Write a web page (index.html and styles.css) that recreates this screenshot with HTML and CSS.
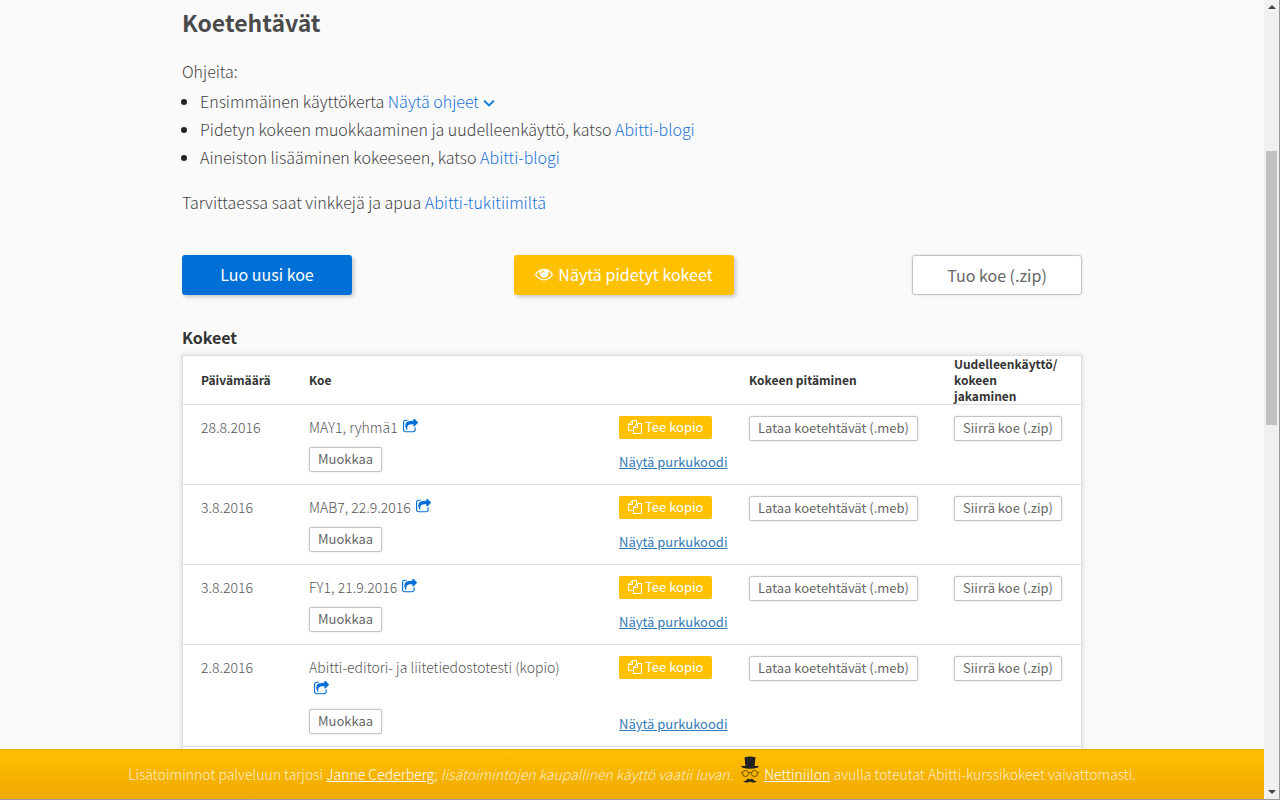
FILE: index.html
```html
<!DOCTYPE html>
<html lang="fi">
<head>
<meta charset="utf-8">
<meta name="viewport" content="width=device-width, initial-scale=1">
<title>Abitti – Koetehtävät</title>
<link rel="stylesheet" href="styles.css">
</head>
<body>
<svg class="sprite" aria-hidden="true">
  <symbol id="angle-down" viewBox="320 512 1152 896"><path d="M1395 736q0 13-10 23l-466 466q-10 10-23 10t-23-10l-466-466q-10-10-10-23t10-23l50-50q10-10 23-10t23 10l393 393 393-393q10-10 23-10t23 10l50 50q10 10 10 23z"/></symbol>
  <symbol id="eye" viewBox="0 0 1792 1792"><path d="M1664 960q-152-236-381-353 61 104 61 225 0 185-131.5 316.5t-316.5 131.5-316.5-131.5-131.5-316.5q0-121 61-225-229 117-381 353 133 205 333.5 326.5t434.5 121.5 434.5-121.5 333.5-326.5zm-720-384q0-20-14-34t-34-14q-125 0-214.5 89.5t-89.5 214.5q0 20 14 34t34 14 34-14 14-34q0-86 61-147t147-61q20 0 34-14t14-34zm848 384q0 34-20 69-140 230-376.5 368.5t-499.5 138.5-499.5-139-376.5-368q-20-35-20-69t20-69q140-229 376.5-368t499.5-139 499.5 139 376.5 368q20 35 20 69z"/></symbol>
  <symbol id="copy" viewBox="0 0 1792 1792"><path d="M1696 384q40 0 68 28t28 68v1216q0 40-28 68t-68 28h-960q-40 0-68-28t-28-68v-288h-544q-40 0-68-28t-28-68v-672q0-40 20-88t48-76l408-408q28-28 76-48t88-20h416q40 0 68 28t28 68v328q68-40 128-40h416zm-544 213l-299 299h299v-299zm-640-384l-299 299h299v-299zm196 647l316-316v-416h-384v416q0 40-28 68t-68 28h-416v640h512v-256q0-40 20-88t48-76zm956 804v-1152h-384v416q0 40-28 68t-68 28h-416v640h896z"/></symbol>
  <symbol id="share" viewBox="64 64 1664 1536"><path d="M1472 989v259q0 119-84.5 203.5t-203.5 84.5h-832q-119 0-203.5-84.5t-84.5-203.5v-832q0-119 84.5-203.5t203.5-84.5h255q13 0 22.5 9.5t9.5 22.5q0 27-26 32-77 26-133 60-10 4-16 4h-112q-66 0-113 47t-47 113v832q0 66 47 113t113 47h832q66 0 113-47t47-113v-214q0-19 18-29 28-13 54-37 16-16 35-8 21 9 21 29zm237-496l-384 384q-18 19-45 19-12 0-25-5-39-17-39-59v-192h-160q-323 0-438 131-119 137-74 473 3 23-20 34-8 2-12 2-16 0-26-13-10-14-21-31t-39.5-68.5-49.5-99.5-38.5-114-17.5-122q0-49 3.5-91t14-90 28-88 47-81.5 68.5-74 94.5-61.5 124.5-48.5 159.5-30.5 196.5-11h160v-192q0-42 39-59 13-5 25-5 26 0 45 19l384 384q19 19 19 45t-19 45z"/></symbol>
</svg>
<div class="window">
  <div class="page">
    <div class="view">
      <main class="content">
        <h1 class="title">Koetehtävät</h1>
        <p class="text">Ohjeita:</p>
        <ul class="help">
          <li>Ensimmäinen käyttökerta <a class="link" href="#">Näytä ohjeet <svg class="icon-angle" aria-hidden="true"><use href="#angle-down"/></svg></a></li>
          <li>Pidetyn kokeen muokkaaminen ja uudelleenkäyttö, katso <a class="link" href="#">Abitti-blogi</a></li>
          <li>Aineiston lisääminen kokeeseen, katso <a class="link" href="#">Abitti-blogi</a></li>
        </ul>
        <p class="text">Tarvittaessa saat vinkkejä ja apua <a class="link" href="#">Abitti-tukitiimiltä</a></p>
        <div class="actions">
          <button class="btn btn-blue" type="button">Luo uusi koe</button>
          <button class="btn btn-yellow" type="button"><svg class="icon-eye" aria-hidden="true"><use href="#eye"/></svg>Näytä pidetyt kokeet</button>
          <button class="btn btn-plain" type="button">Tuo koe (.zip)</button>
        </div>
        <h2 class="subtitle">Kokeet</h2>
        <table class="exams">
          <thead>
            <tr><th>Päivämäärä</th><th>Koe</th><th></th><th>Kokeen pitäminen</th><th>Uudelleenkäyttö/<br>kokeen jakaminen</th></tr>
          </thead>
          <tbody>
            <tr>
              <td><span class="date">28.8.2016</span></td>
              <td><div class="name">MAY1, ryhmä1<a class="share" href="#" aria-label="Jaa"><svg class="icon-share" aria-hidden="true"><use href="#share"/></svg></a></div><button class="small" type="button">Muokkaa</button></td>
              <td class="split"><button class="small small-yellow" type="button"><svg class="icon-copy" aria-hidden="true"><use href="#copy"/></svg>Tee kopio</button><a class="code" href="#">Näytä purkukoodi</a></td>
              <td><button class="small" type="button">Lataa koetehtävät (.meb)</button></td>
              <td><button class="small" type="button">Siirrä koe (.zip)</button></td>
            </tr>
            <tr>
              <td><span class="date">3.8.2016</span></td>
              <td><div class="name">MAB7, 22.9.2016<a class="share" href="#" aria-label="Jaa"><svg class="icon-share" aria-hidden="true"><use href="#share"/></svg></a></div><button class="small" type="button">Muokkaa</button></td>
              <td class="split"><button class="small small-yellow" type="button"><svg class="icon-copy" aria-hidden="true"><use href="#copy"/></svg>Tee kopio</button><a class="code" href="#">Näytä purkukoodi</a></td>
              <td><button class="small" type="button">Lataa koetehtävät (.meb)</button></td>
              <td><button class="small" type="button">Siirrä koe (.zip)</button></td>
            </tr>
            <tr>
              <td><span class="date">3.8.2016</span></td>
              <td><div class="name">FY1, 21.9.2016<a class="share" href="#" aria-label="Jaa"><svg class="icon-share" aria-hidden="true"><use href="#share"/></svg></a></div><button class="small" type="button">Muokkaa</button></td>
              <td class="split"><button class="small small-yellow" type="button"><svg class="icon-copy" aria-hidden="true"><use href="#copy"/></svg>Tee kopio</button><a class="code" href="#">Näytä purkukoodi</a></td>
              <td><button class="small" type="button">Lataa koetehtävät (.meb)</button></td>
              <td><button class="small" type="button">Siirrä koe (.zip)</button></td>
            </tr>
            <tr>
              <td><span class="date">2.8.2016</span></td>
              <td><div class="name">Abitti-editori- ja liitetiedostotesti (kopio)<a class="share" href="#" aria-label="Jaa"><svg class="icon-share" aria-hidden="true"><use href="#share"/></svg></a></div><button class="small" type="button">Muokkaa</button></td>
              <td class="split"><button class="small small-yellow" type="button"><svg class="icon-copy" aria-hidden="true"><use href="#copy"/></svg>Tee kopio</button><a class="code" href="#">Näytä purkukoodi</a></td>
              <td><button class="small" type="button">Lataa koetehtävät (.meb)</button></td>
              <td><button class="small" type="button">Siirrä koe (.zip)</button></td>
            </tr>
          </tbody>
        </table>
      </main>
    </div>
    <footer class="banner">
      <span>Lisätoiminnot palveluun tarjosi <a href="#">Janne Cederberg</a>; <em>lisätoimintojen kaupallinen käyttö vaatii luvan.</em></span>
      <svg class="niilo" viewBox="0 0 18 28" aria-hidden="true">
        <path class="ink" d="M3.5 1.2Q9 0 14.5 1.2L13.6 10Q16 10.200 17 9.800Q18 10.400 17 11.600Q9 14 1 11.600Q0 10.400 1 9.800Q2 10.200 4.400 10Z"/>
        <g class="glasses"><circle cx="4.500" cy="17.500" r="3"/><circle cx="13.500" cy="17.500" r="3"/><path d="M7.500 17Q9 16 10.500 17M0 16.500L1.500 17M16.500 17L18 16.500"/></g>
        <path class="ink" d="M9 23.500Q11 22 12.500 24Q14 25.600 16 25Q13.500 28 9 25.400Q4.500 28 2 25Q4 25.600 5.500 24Q7 22 9 23.500Z"/>
      </svg>
      <span><a href="#">Nettiniilon</a> avulla toteutat Abitti-kurssikokeet vaivattomasti.</span>
    </footer>
  </div>
  <div class="scroll" aria-hidden="true">
    <svg class="arrow" viewBox="0 0 8 4"><path d="M0 4L4 0L8 4Z"/></svg>
    <div class="track"><div class="thumb"></div></div>
    <svg class="arrow" viewBox="0 0 8 4"><path d="M0 0L4 4L8 0Z"/></svg>
  </div>
</div>
</body>
</html>
```
FILE: styles.css
```css
* { box-sizing: border-box; }
body {
  margin: 0;
  background: #fafafa;
  color: #444;
  font-family: "Source Sans Pro", "Noto Sans CJK SC", "Open Sans", sans-serif;
  font-size: 16px;
  font-weight: 300;
  line-height: 28px;
}
button { font: inherit; cursor: pointer; }
svg { fill: currentColor; }
.sprite { display: none; }

.window {
  display: flex;
  height: 100vh;
  border-right: 1px solid #999;
  border-bottom: 1px solid #999;
}
.page { flex: 1; min-width: 0; display: flex; flex-direction: column; }
.view { flex: 1; min-height: 0; overflow: hidden; }
.content { max-width: 900px; margin: 0 auto; }

.title { margin: 0; padding-top: 6px; font-size: 23px; font-weight: 700; line-height: 32px; color: #4a4a4a; }
.text { margin: 19px 0 0; }
.help { margin: 2px 0 0; padding-left: 18px; }
.help ::marker { color: #222; }
.help + .text { margin-top: 17px; }
.link { color: #1a73d9; text-decoration: none; }
.icon-angle { width: 12px; height: 9px; color: #0070d6; stroke: currentColor; stroke-width: 60; }

.actions { display: flex; justify-content: space-between; margin-top: 39px; }
.btn {
  display: flex;
  align-items: center;
  justify-content: center;
  height: 40px;
  min-width: 170px;
  padding: 0 21px 2px;
  border: 0;
  border-radius: 3px;
  color: #fff;
  font-weight: 400;
  box-shadow: 2px 2px 4px rgba(0, 0, 0, .2);
}
.btn-blue { background: #0070d6; }
.btn-yellow { margin-right: 16px; background: #ffc000; }
.btn-plain { padding-bottom: 0; background: #fff; color: #666; border: 1px solid #c4c4c4; box-shadow: 0 0 3px rgba(0, 0, 0, .12); }
.icon-eye { width: 18px; height: 18px; margin-right: 5px; }

.subtitle { margin: 28px 0 4px; font-size: 16px; font-weight: 700; line-height: 28px; color: #333; }
.exams { display: block; background: #fff; border: 1px solid #ddd; box-shadow: 0 0 6px rgba(0, 0, 0, .15); }
.exams thead, .exams tbody { display: block; }
.exams tbody { padding-bottom: 48px; }
.exams tr { display: grid; grid-template-columns: 108fr 310fr 130fr 205fr 145fr; border-bottom: 1px solid #ddd; }
.exams th {
  align-self: center;
  padding: 0 20px 0 18px;
  text-align: left;
  font-size: 12px;
  font-weight: 700;
  line-height: 16px;
  color: #333;
}
.exams th:first-child { padding-right: 0; }
.exams th:last-child { padding-right: 22px; }
.exams td { padding: 11px 0 12px 18px; font-size: 14px; line-height: 22px; color: #555; }
.exams td:nth-child(2) { padding-right: 28px; }
.exams .split { display: flex; flex-direction: column; align-items: flex-start; justify-content: space-between; }
.name { margin-bottom: 9px; }
.share { display: inline-block; margin-left: 5px; color: #0070d6; }
.icon-share { display: block; width: 15px; height: 14px; }
.small {
  display: flex;
  align-items: center;
  height: 25px;
  padding: 0 8px 2px;
  background: #fff;
  border: 1px solid #c4c4c4;
  border-radius: 2px;
  box-shadow: 0 0 3px rgba(0, 0, 0, .12);
  color: #666;
  font-size: 13px;
  font-weight: 400;
  white-space: nowrap;
}
.small-yellow { height: 23px; padding: 0 9px 2px; background: #ffc000; color: #fff; border: 0; box-shadow: none; }
.icon-copy { width: 14px; height: 14px; margin-right: 3px; }
.code { font-size: 13px; font-weight: 400; line-height: 20px; color: #337ab7; white-space: nowrap; }

.banner {
  display: flex;
  align-items: center;
  justify-content: center;
  height: 50px;
  padding-bottom: 2px;
  background: linear-gradient(#ffc000, #f0a800);
  border-top: 1px solid #eaa900;
  color: rgba(255, 255, 255, .8);
  font-size: 14px;
  white-space: nowrap;
}
.banner a { color: #fff; }
.niilo { width: 18px; height: 28px; margin: 0 5px 7px 8px; }
.ink { fill: #222; }
.glasses { fill: none; stroke: #6b4c00; stroke-width: 1; }

.scroll { width: 15px; display: flex; flex-direction: column; align-items: center; padding: 5px 0; background: #f0f0f0; }
.arrow { width: 8px; height: 4px; color: #444; }
.track { flex: 1; width: 11px; padding-top: 142px; }
.thumb { height: 36%; min-height: 274px; background: #c1c1c1; }
```
